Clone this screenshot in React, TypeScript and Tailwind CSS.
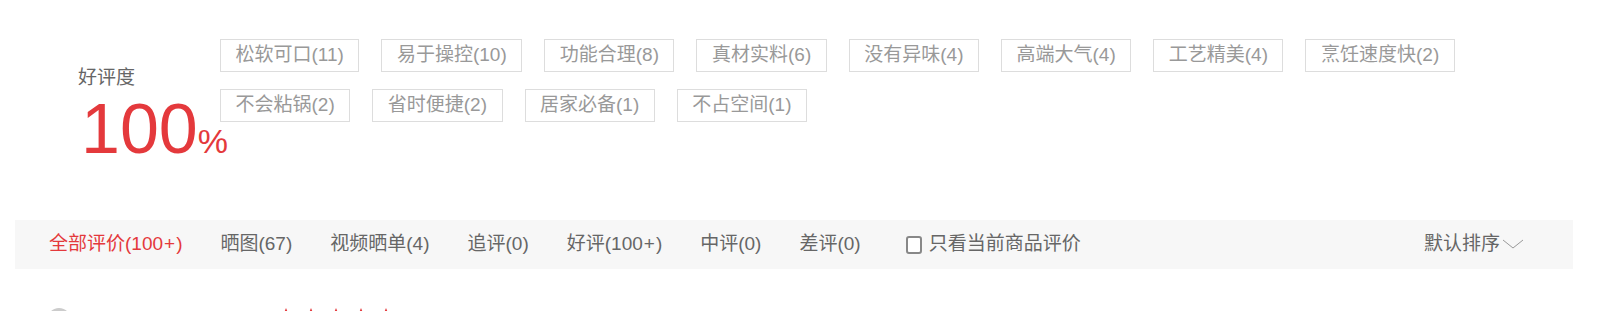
import React from "react";

const tags: [string, number][] = [
  ["松软可口", 11],
  ["易于操控", 10],
  ["功能合理", 8],
  ["真材实料", 6],
  ["没有异味", 4],
  ["高端大气", 4],
  ["工艺精美", 4],
  ["烹饪速度快", 2],
  ["不会粘锅", 2],
  ["省时便捷", 2],
  ["居家必备", 1],
  ["不占空间", 1],
];

function Plus() {
  return <span className="mx-[1px]">+</span>;
}

function Star() {
  return (
    <svg width="20" height="20" viewBox="0 0 20 20">
      <polygon
        points="10,0 12.9,6.9 20,7.6 14.6,12.3 16.2,19.5 10,15.8 3.8,19.5 5.4,12.3 0,7.6 7.1,6.9"
        fill="#e4393c"
      />
    </svg>
  );
}

export default function App() {
  return (
    <div className="min-h-screen bg-white font-['Liberation_Sans','Noto_Sans_CJK_SC',sans-serif] text-[#666]">
      <div className="ml-[15px] w-[1558px]">
        {/* rating summary + tags */}
        <div className="flex h-[220px] pt-[39px]">
          <div className="w-[205px] shrink-0 pl-[63px] pt-[29px]">
            <div className="text-[19px] leading-[19px] text-[#666]">好评度</div>
            <div className="ml-[3px] mt-[7px] text-[70px] leading-none text-[#e4393c]">
              100<span className="text-[34px]">%</span>
            </div>
          </div>
          <div className="flex w-[1320px] flex-wrap content-start gap-x-[22px] gap-y-[17px]">
            {tags.map(([name, n]) => (
              <span
                key={name}
                className="flex h-[33px] items-center border border-[#ddd] px-[14.5px] text-[19px] text-[#999]"
              >
                {name}({n})
              </span>
            ))}
          </div>
        </div>

        {/* filter bar */}
        <div className="flex h-[49px] items-center bg-[#f7f7f7] pl-[34px] pr-[49px] text-[19px]">
          <div className="flex items-center gap-[38px]">
            <span className="text-[#e4393c]">
              全部评价(100<Plus />)
            </span>
            <span>晒图(67)</span>
            <span>视频晒单(4)</span>
            <span>追评(0)</span>
            <span>
              好评(100<Plus />)
            </span>
            <span>中评(0)</span>
            <span>差评(0)</span>
            <label className="ml-[7px] flex items-center gap-[7px]">
              <span className="h-[18px] w-[16px] rounded-[3px] border-2 border-[#888] bg-white" />
              只看当前商品评价
            </label>
          </div>
          <div className="ml-auto flex items-center gap-[2px]">
            <span>默认排序</span>
            <svg width="22" height="10" viewBox="0 0 22 10" className="-mt-[2px]">
              <polyline points="1,1 11,9 21,1" fill="none" stroke="#999" strokeWidth="1" />
            </svg>
          </div>
        </div>

        {/* first comment (cut off) */}
        <div className="mt-[39px] flex items-start pl-[32px]">
          <div className="h-[24px] w-[24px] rounded-full bg-[#ccc]" />
          <div className="ml-[205px] flex gap-[5px]">
            <Star />
            <Star />
            <Star />
            <Star />
            <Star />
          </div>
        </div>
      </div>
    </div>
  );
}
